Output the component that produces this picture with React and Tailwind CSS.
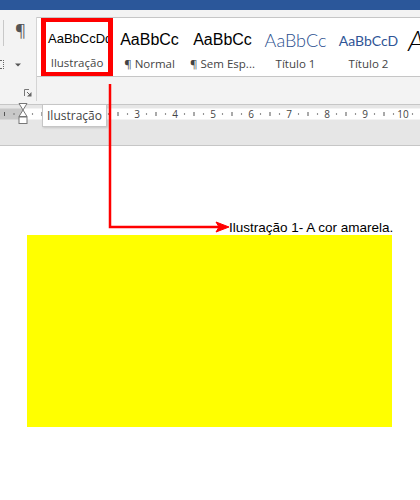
import React from "react";

const styles = [
  { sample: "AaBbCcDd", label: "Ilustração", cls: "text-[13px] text-black font-['Liberation_Sans',Arial,sans-serif]", selected: true },
  { sample: "AaBbCc", label: "¶ Normal", cls: "text-[16px] text-black font-['Liberation_Sans',Arial,sans-serif]" },
  { sample: "AaBbCc", label: "¶ Sem Esp...", cls: "text-[16px] text-black font-['Liberation_Sans',Arial,sans-serif]" },
  { sample: "AaBbCc", label: "Título 1", cls: "text-[18px] text-[#2b4f8f] font-light font-['Lato',sans-serif]" },
  { sample: "AaBbCcD", label: "Título 2", cls: "text-[14px] text-[#2f5496] font-['Lato',sans-serif]" },
];

function Ruler() {
  const nums = [3, 4, 5, 6, 7, 8, 9, 10];
  const marks = [];
  for (let i = 0; i < 11; i++) {
    const x = 23 + i * 38;
    marks.push(<circle key={"a" + i} cx={x + 9.5} cy={7} r={0.7} fill="#555" />);
    marks.push(<rect key={"b" + i} x={x + 18.5} y={5} width={1} height={4} fill="#555" />);
    marks.push(<circle key={"c" + i} cx={x + 28.5} cy={7} r={0.7} fill="#555" />);
  }
  return (
    <svg width="420" height="14" className="block">
      <rect x="0" y="1.5" width="23" height="11" fill="#c8c8c8" />
      <rect x="23" y="1.5" width="397" height="11" fill="#ffffff" />
      <rect x="4" y="5" width="1" height="4" fill="#555" />
      <circle cx="14" cy="7" r="0.7" fill="#555" />
      {marks}
      {nums.map((n) => (
        <text
          key={n}
          x={23 + n * 38}
          y={10.5}
          textAnchor="middle"
          fontSize="10"
          fill="#444"
          fontFamily="'Open Sans', sans-serif"
        >
          {n}
        </text>
      ))}
    </svg>
  );
}

export default function App() {
  return (
    <div className="relative w-[420px] h-[500px] overflow-hidden bg-white flex flex-col font-['Open_Sans',sans-serif]">
      {/* title bar */}
      <div className="h-[10px] bg-[#2b579a] shrink-0" />

      {/* ribbon */}
      <div className="h-[94px] bg-[#f3f3f3] flex shrink-0">
        <div className="w-[37px] shrink-0 border-r border-[#d4d4d4] mt-[7px] mb-[3px] flex flex-col relative">
          <div className="absolute left-[3px] top-[3px] w-px h-[26px] bg-[#c8c8c8]" />
          <div className="ml-[15px] mt-[3px] text-[17px] leading-[20px] text-[#555]">¶</div>
          <div className="mt-[20px] flex items-center">
            <div className="w-[4px] h-[9px] border-t border-r border-b border-dotted border-[#666]" />
            <svg width="8" height="6" className="ml-[10px]" viewBox="0 0 8 6">
              <path d="M1 1.5 L4 4.5 L7 1.5 Z" fill="#555" />
            </svg>
          </div>
          <svg width="8" height="8" viewBox="0 0 8 8" className="absolute left-[24px] bottom-[4px]">
            <path d="M0.5 0.5 H5 M0.5 0.5 V7" stroke="#777" strokeWidth="1" fill="none" />
            <path d="M7.5 3 V7.5 H3 Z" fill="#666" />
            <path d="M3 3 L6 6" stroke="#666" strokeWidth="1" />
          </svg>
        </div>
        <div className="flex-1 min-w-0 flex flex-col">
          <div className="mt-[7px] h-[60px] bg-white border-t border-b border-[#c6c6c6] flex pl-[4px] overflow-hidden">
            {styles.map((s, i) => (
              <div
                key={i}
                className={
                  "shrink-0 flex flex-col items-center overflow-hidden " +
                  (s.selected ? "w-[72px] border-[5px] border-[#ff0000] -mt-px h-[60px]" : "w-[73px] pt-[5px]")
                }
              >
                <div className={"h-[28px] px-[4px] whitespace-nowrap overflow-hidden w-full flex items-center " + (s.selected ? "mt-[3px] justify-start pl-[2px]" : "mt-[3px] justify-center") + " " + s.cls}>
                  {s.sample}
                </div>
                <div className="mt-[3px] text-[11.5px] leading-[14px] text-[#444] whitespace-nowrap">
                  {s.label}
                </div>
              </div>
            ))}
            <div className="shrink-0 pl-[3px] pt-[6px] text-[28px] leading-[32px] italic font-light text-black font-['Lato',sans-serif]">
              A
            </div>
          </div>
        </div>
      </div>

      {/* ruler band */}
      <div className="h-[42px] bg-[#e6e6e6] border-t border-b border-[#c6c6c6] shrink-0 pt-[2px]">
        <Ruler />
      </div>

      {/* page */}
      <div className="flex-1 bg-white">
        <div className="mt-[75px] ml-[229px] text-[13.5px] leading-[14px] text-black font-['Liberation_Sans',Arial,sans-serif]">
          Ilustração 1- A cor amarela.
        </div>
        <div className="ml-[27px] w-[365px] h-[192px] bg-[#ffff00]" />
      </div>

      {/* hourglass indent marker */}
      <svg width="10" height="22" viewBox="0 0 10 22" className="absolute left-[18px] top-[103px]">
        <path d="M1 0.5 H9 L5 7 Z" fill="#fff" stroke="#777" />
        <path d="M5 7 L9 13.5 H1 Z" fill="#fff" stroke="#777" />
        <rect x="1" y="14" width="8" height="6.5" fill="#fff" stroke="#777" />
      </svg>

      {/* tooltip */}
      <div className="absolute left-[42px] top-[104px] h-[23px] px-[4px] bg-white border border-[#c6c6c6] shadow-[1px_1px_2px_rgba(0,0,0,0.15)] flex items-center text-[12px] text-[#444]">
        Ilustração
      </div>

      {/* red arrow annotation */}
      <svg width="420" height="500" className="absolute left-0 top-0 pointer-events-none">
        <path d="M110 84 V227 H219" stroke="#ff0000" strokeWidth="2.5" fill="none" />
        <path d="M229 227 L216 222 L219 227 L216 232 Z" fill="#ff0000" stroke="#ff0000" strokeWidth="1" />
      </svg>
    </div>
  );
}
